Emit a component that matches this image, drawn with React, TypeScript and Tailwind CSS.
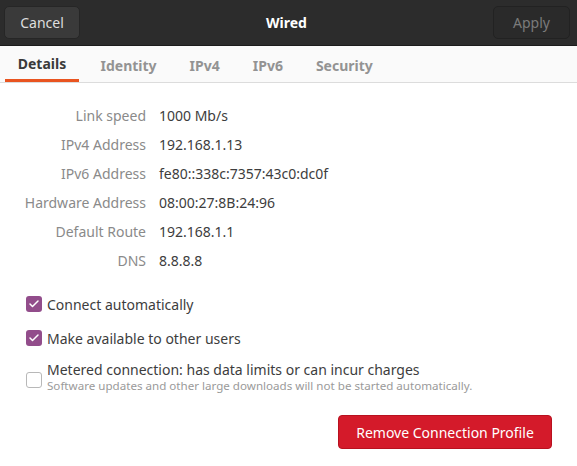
import { Check } from 'lucide-react';

const rows = [
  ['Link speed', '1000 Mb/s'],
  ['IPv4 Address', '192.168.1.13'],
  ['IPv6 Address', 'fe80::338c:7357:43c0:dc0f'],
  ['Hardware Address', '08:00:27:8B:24:96'],
  ['Default Route', '192.168.1.1'],
  ['DNS', '8.8.8.8'],
];

const tabs = ['Details', 'Identity', 'IPv4', 'IPv6', 'Security'];

export default function App() {
  return (
    <div className="w-[577px] h-[466px] bg-white overflow-hidden text-[#3d3d3d] font-['Noto_Sans',sans-serif] text-[14px]">
      {/* Header bar */}
      <div className="h-[46px] bg-[#2c2c2c] border-b border-[#1c1c1c] flex items-center justify-between px-[4px]">
        <button className="h-[33px] w-[76px] rounded-[5px] bg-[#3a3a3a] border border-[#262626] text-[#dedede] text-[14px]">
          Cancel
        </button>
        <div className="text-white font-bold text-[14px]">Wired</div>
        <button className="h-[33px] w-[77px] rounded-[5px] bg-[#2a2a2a] border border-[#222] text-[#7b7b7b] text-[14px] mr-[3px]">
          Apply
        </button>
      </div>

      {/* Tabs */}
      <div className="h-[37px] bg-[#fafafa] border-b border-[#dcdcdc] flex items-stretch pl-[5px]">
        {tabs.map((t, i) => (
          <div
            key={t}
            className={
              i === 0
                ? 'w-[74px] mr-[5px] flex items-center justify-center font-bold text-[#3a3a3a] border-b-[3px] border-[#e95420] pt-[2px]'
                : 'px-[16.5px] flex items-center justify-center font-bold text-[#939393] pt-[2px]'
            }
          >
            {t}
          </div>
        ))}
      </div>

      {/* Details */}
      <div className="pt-[23px] grid grid-cols-[146px_1fr] gap-x-[13px] gap-y-[9px] leading-[20px]">
        {rows.map(([k, v]) => (
          <div key={k} className="contents">
            <div className="text-right text-[#8a8a8a]">{k}</div>
            <div className="text-[#3d3d3d]">{v}</div>
          </div>
        ))}
      </div>

      {/* Checkboxes */}
      <div className="pl-[26px] mt-[23px] flex flex-col">
        <label className="flex items-center gap-[5px] h-[20px]">
          <span className="w-[16px] h-[16px] rounded-[3px] bg-[#924d8b] flex items-center justify-center">
            <Check size={12} strokeWidth={3} color="white" />
          </span>
          <span>Connect automatically</span>
        </label>
        <label className="flex items-center gap-[5px] h-[20px] mt-[14px]">
          <span className="w-[16px] h-[16px] rounded-[3px] bg-[#924d8b] flex items-center justify-center">
            <Check size={12} strokeWidth={3} color="white" />
          </span>
          <span>Make available to other users</span>
        </label>
        <label className="flex items-start gap-[5px] mt-[13px]">
          <span className="w-[16px] h-[16px] rounded-[3px] border border-[#b8b8b8] bg-white mt-[11px]" />
          <span className="flex flex-col">
            <span className="leading-[18px]">Metered connection: has data limits or can incur charges</span>
            <span className="text-[11.6px] leading-[13px] text-[#9a9a9a]">
              Software updates and other large downloads will not be started automatically.
            </span>
          </span>
        </label>
      </div>

      {/* Remove */}
      <div className="flex justify-end pr-[25px] mt-[23px]">
        <button className="w-[214px] h-[34px] rounded-[4px] bg-[#d41a2a] border border-[#b8111f] text-white text-[14px]">
          Remove Connection Profile
        </button>
      </div>
    </div>
  );
}
